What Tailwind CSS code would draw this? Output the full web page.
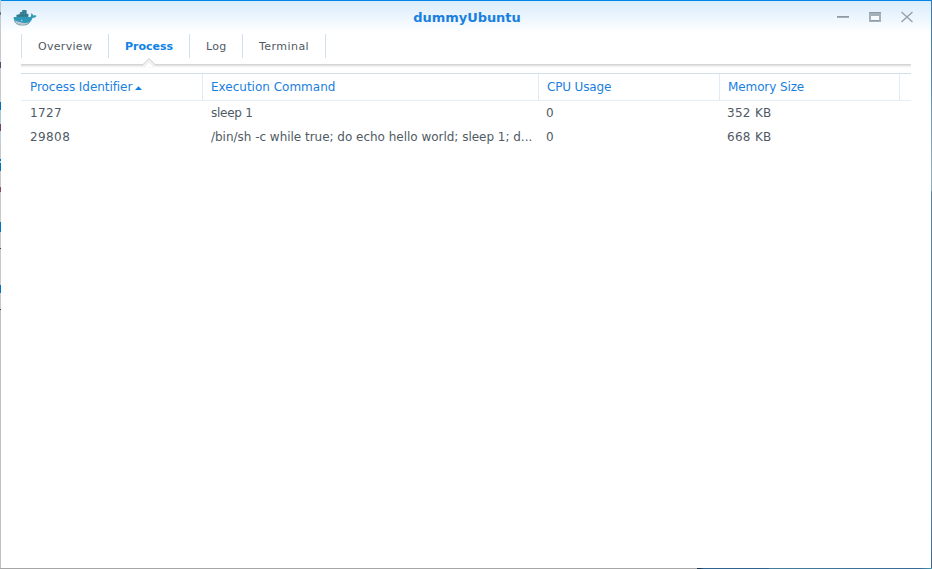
<!DOCTYPE html>
<html lang="en">
<head>
<meta charset="utf-8">
<title>dummyUbuntu</title>
<script src="https://cdn.jsdelivr.net/npm/@tailwindcss/browser@4"></script>
</head>
<body class="w-[932px] h-[569px] overflow-hidden flex flex-col bg-white text-[12px] text-[#505a64] font-['DejaVu_Sans',sans-serif]">
<div class="flex h-[568px] shrink-0">
  <!-- desktop visible along the left edge -->
  <div class="w-px shrink-0 bg-[linear-gradient(#c5cad0_0_12px,#777_12px_15px,#c5cad0_15px_62px,#5c4970_62px_68px,#c5cad0_68px_102px,#006fbd_102px_110px,#adc9db_110px_124px,#7d4165_124px_131px,#bad0e0_131px_147px,#c8c8c8_147px_159px,#0078c8_159px_161px,#c8c8c8_161px_163px,#0074c4_163px_171px,#c8c8c8_171px_187px,#884b55_187px_192px,#c8c8c8_192px_222px,#0074c4_222px_232px,#c8c8c8_232px_248px,#404040_248px_249px,#c8c8c8_249px_285px,#0074c4_285px_293px,#c8c8c8_293px_309px,#404040_309px_310px,#c0c0c0_310px)]"></div>
  <main class="w-[930px] h-[568px] border-t border-[#0086e5] bg-[linear-gradient(#d9ecfc,#ffffff_32px)]">
    <header class="h-[33px] flex items-center">
      <div class="w-[92px] pl-[12px]">
        <svg class="w-[25px] h-[19px] mt-[-1px]" viewBox="0 0 26 20">
          <path d="M3.500 10V7L7 6.500V4.500L9.500 4V2H14v4h2v4z" fill="#3a8298"/>
          <path d="M4 8h12M7.500 6v4M10.500 4v6M13.500 3v7" stroke="#2b7187" stroke-width=".6" fill="none"/>
          <path d="M.5 9.500h17.500c1.500-1 1-3 .5-4 2 .5 2.500 1.500 2.500 2.500 1-.5 3-.5 3.700.3-1 1.400-2.500 1.900-4.200 1.900-2 5.300-5.500 7.800-10.500 7.800-6 0-9.500-3-9.500-8.500z" fill="#3098b8"/>
          <path d="M1.500 13c1.500 4 4.500 5 8.500 5 3 0 5.500-1 7.500-3-3.500 1-6.500 1-9.500 0-2-.4-4.500-1-6.500-2z" fill="#b7cad1"/>
          <path d="M1.500 13.500c1.500 3.800 4.500 4.700 8.500 4.700 3.500 0 5.500-1 7.500-3" fill="none" stroke="#66808b" stroke-width=".6"/>
          <circle cx="9" cy="13" r=".7" fill="#d9f3fa"/>
        </svg>
      </div>
      <h1 class="flex-1 pt-px pl-[2px] text-center font-bold text-[13px] tracking-[-.05px] text-[#1a80e0] leading-[16px]">dummyUbuntu</h1>
      <div class="w-[92px] h-[33px] pt-[10px] flex gap-[20px] items-start">
        <svg class="w-[12px] h-[12px] ml-[-2px]" viewBox="0 0 12 12"><path d="M0 5h12v1H0z" fill="#8d99a3"/><path d="M0 6h12v1H0z" fill="#a5b0b9"/></svg>
        <svg class="w-[12px] h-[12px]" viewBox="0 0 12 12"><path d="M0 1h12v10H0z" fill="#a5b1ba"/><path d="M0 1h12v1H0zM2 9h8v1H2z" fill="#8d99a3"/><path d="M2 5h8v4H2z" fill="#f8fcff"/></svg>
        <svg class="w-[12px] h-[12px]" viewBox="0 0 12 12"><path d="M.5 1l11 10M11.500 1l-11 10" stroke="#97a3ad" stroke-width="1.500"/></svg>
      </div>
    </header>
    <nav class="h-[30px] mx-[20px] flex text-[11px] leading-[26px] relative">
      <div class="h-[24px] w-[87px] pl-[16px] border-l border-[#d3dfeb] tracking-[.3px]">Overview</div>
      <div class="h-[24px] w-[81px] pl-[16px] border-l border-[#d3dfeb] font-bold text-[#0f82e8]">Process</div>
      <div class="h-[24px] w-[53px] pl-[16px] border-l border-[#d3dfeb] tracking-[.3px]">Log</div>
      <div class="h-[24px] w-[84px] pl-[16px] border-x border-[#d3dfeb] tracking-[.45px]">Terminal</div>
      <!-- pointer under the active tab, over the rule -->
      <svg class="absolute left-[121px] top-[23px] w-[14px] h-[10px] z-10" viewBox="0 0 14 10">
        <path d="M1 7.500L7 1.500L13 7.500V10H1z" fill="#f1f1f1"/>
        <path d="M3 10L7 5.500L11 10z" fill="#fff"/>
        <path d="M0 7.500H1L7 1.500L13 7.500H14" fill="none" stroke="#d0d0d0"/>
      </svg>
    </nav>
    <div class="h-[9px] mx-[20px] bg-[linear-gradient(#d6d6d6_0_1px,#e2e2e2_1px_2px,#f3f3f3_2px_3px,#fbfbfb_3px_4px,#fff_4px)]"></div>
    <div class="mx-[20px] h-[28px] flex border-t border-t-[#d0deea] border-b border-b-[#e4eef7] text-[#1a80e0] leading-[26px]">
      <div class="w-[182px] pl-[9px] border-r border-[#e1ebf5] flex items-center"><span class="tracking-[-.06px]">Process Identifier</span><svg class="ml-[3px] mt-[2px] w-[7px] h-[4px]" viewBox="0 0 7 4"><path d="M0 4L3.500 .3L7 4z" fill="#0f82e8"/></svg></div>
      <div class="w-[336px] pl-[8px] border-r border-[#e1ebf5]">Execution Command</div>
      <div class="w-[181px] pl-[8px] border-r border-[#e1ebf5] tracking-[-.15px]">CPU Usage</div>
      <div class="w-[180px] pl-[8px] border-r border-[#e1ebf5] tracking-[-.1px]">Memory Size</div>
    </div>
    <div class="mx-[20px] h-[24px] flex leading-[24px]">
      <div class="w-[181px] pl-[9px] tracking-[.4px]">1727</div>
      <div class="w-[336px] pl-[9px] tracking-[-.25px]">sleep 1</div>
      <div class="w-[181px] pl-[8px]">0</div>
      <div class="w-[180px] pl-[8px] tracking-[.3px]">352 KB</div>
    </div>
    <div class="mx-[20px] h-[24px] flex leading-[24px]">
      <div class="w-[181px] pl-[9px] tracking-[.4px]">29808</div>
      <div class="w-[336px] pl-[9px] tracking-[-.02px] whitespace-nowrap">/bin/sh -c while true; do echo hello world; sleep 1; d...</div>
      <div class="w-[181px] pl-[8px]">0</div>
      <div class="w-[180px] pl-[8px] tracking-[.3px]">668 KB</div>
    </div>
  </main>
  <div class="w-px shrink-0 bg-[linear-gradient(#3579b5,#4386b5_60px,#86b4c6_170px_190px,#5089a8_192px,#4b83a8_500px,#3567a0)]"></div>
</div>
<div class="h-px shrink-0 bg-[linear-gradient(90deg,#a6a6a6_0_697px,#20364f_697px_700px,#316391_704px_768px,#447d9c_770px,#386b98_920px,#4b9bb0)]"></div>
</body>
</html>
